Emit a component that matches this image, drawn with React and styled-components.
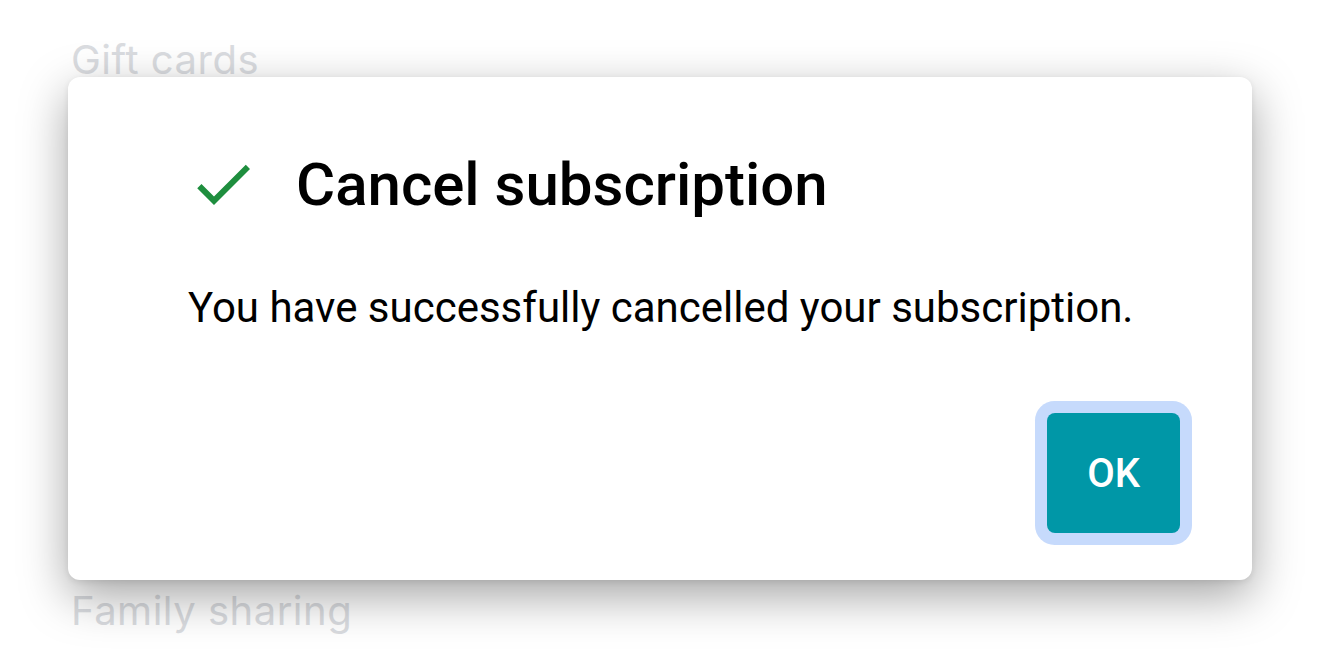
import React from "react";
import styled, { createGlobalStyle } from "styled-components";

const GlobalStyle = createGlobalStyle`
  html, body {
    margin: 0;
    padding: 0;
    background: #ffffff;
  }
  body {
    font-family: Roboto, "Liberation Sans", sans-serif;
    overflow: hidden;
  }
`;

const Screen = styled.div`
  position: relative;
  width: 1320px;
  height: 660px;
  overflow: hidden;
  background: #ffffff;
`;

const MenuList = styled.ul`
  list-style: none;
  margin: 0;
  padding: 40px 0 0 71px;
  display: flex;
  flex-direction: column;
  gap: 51.8px;
`;

const MenuItem = styled.li`
  height: 40px;
  line-height: 40px;
  font-family: Inter, "Open Sans", "Liberation Sans", sans-serif;
  font-weight: 400;
  font-size: 40px;
  letter-spacing: 0.5px;
  color: #dadce0;
  white-space: nowrap;
`;

const Dialog = styled.div`
  position: absolute;
  left: 68px;
  top: 77px;
  width: 1184px;
  height: 503px;
  box-sizing: border-box;
  padding: 71px 72px 47px 120px;
  background: #ffffff;
  border-radius: 12px;
  box-shadow: 0 16px 48px rgba(0, 0, 0, 0.36), 0 2px 6px rgba(0, 0, 0, 0.08);
  display: flex;
  flex-direction: column;
`;

const TitleRow = styled.div`
  display: flex;
  align-items: center;
  gap: 37px;
  height: 72px;
`;

const IconBox = styled.svg`
  width: 72px;
  height: 72px;
  flex: none;
  margin-left: -1px;
  fill: #1e8e3e;
`;

const Title = styled.h2`
  margin: 0;
  font-family: Roboto, "Liberation Sans", sans-serif;
  font-weight: 500;
  font-size: 60px;
  color: #000000;
  white-space: nowrap;
`;

const Message = styled.p`
  margin: 63px 0 0 0;
  font-family: Roboto, "Liberation Sans", sans-serif;
  font-weight: 400;
  font-size: 42px;
  color: #000000;
  white-space: nowrap;
`;

const Footer = styled.div`
  margin-top: auto;
  display: flex;
  justify-content: flex-end;
`;

const PrimaryButton = styled.button`
  height: 120px;
  padding: 0 40px;
  border: none;
  border-radius: 8px;
  background: #0097a7;
  color: #ffffff;
  font-family: Roboto, "Liberation Sans", sans-serif;
  font-weight: 500;
  font-size: 40px;
  box-shadow: 0 0 0 12px #c6dafc;
  cursor: pointer;
`;

const menuItems = [
  "Gift cards",
  "Payment methods",
  "Subscriptions",
  "Budget & history",
  "Order history",
  "Redeem code",
  "Family sharing",
];

export default function App() {
  return (
    <>
      <GlobalStyle />
      <Screen>
        <MenuList>
          {menuItems.map((item) => (
            <MenuItem key={item}>{item}</MenuItem>
          ))}
        </MenuList>
        <Dialog role="dialog">
          <TitleRow>
            <IconBox viewBox="0 0 24 24" aria-hidden="true">
              <path d="M9 16.17L4.83 12l-1.42 1.41L9 19 21 7l-1.41-1.41z" />
            </IconBox>
            <Title>Cancel subscription</Title>
          </TitleRow>
          <Message>You have successfully cancelled your subscription.</Message>
          <Footer>
            <PrimaryButton>OK</PrimaryButton>
          </Footer>
        </Dialog>
      </Screen>
    </>
  );
}
